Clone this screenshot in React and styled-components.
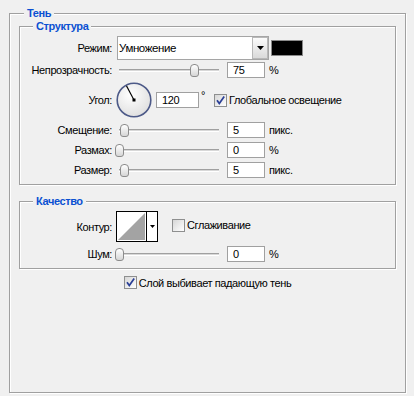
import React from "react";
import styled, { createGlobalStyle } from "styled-components";

const GlobalStyle = createGlobalStyle`
  html, body { margin: 0; padding: 0; background: #f0f0f0; }
  body {
    font-family: "Liberation Sans", Arial, sans-serif;
    font-size: 11px;
    letter-spacing: -0.4px;
    color: #000;
  }
`;

const Page = styled.div`
  width: 414px;
  height: 396px;
  box-sizing: border-box;
  padding: 7px 8px 3px 9px;
`;

const Group = styled.fieldset`
  margin: ${(p) => p.$mt || 0}px 0 0 0;
  min-width: 0;
  box-sizing: border-box;
  border: 1px solid #a0a0a0;
  box-shadow: inset 1px 1px 0 #fff, 1px 1px 0 #fff;
  padding: ${(p) => p.$pad};
  height: ${(p) => (p.$fill ? "100%" : "auto")};
`;

const Legend = styled.legend`
  margin-left: ${(p) => p.$indent}px;
  padding: 0 3px;
  font-weight: bold;
  color: #0b50d2;
  line-height: 13px;
  background: #f0f0f0;
`;

const Row = styled.div`
  display: flex;
  align-items: center;
  justify-content: ${(p) => (p.$center ? "center" : "flex-start")};
  margin-top: ${(p) => p.$mt || 0}px;
  height: ${(p) => p.$h}px;
`;

const Label = styled.span`
  flex: none;
  width: 83px;
  margin-right: 4px;
  text-align: right;
  white-space: nowrap;
`;

const Select = styled.div`
  flex: none;
  display: flex;
  width: 152px;
  height: 24px;
  box-sizing: border-box;
  margin-left: 1px;
  border: 1px solid #a5a5a5;
  background: #fff;
`;

const SelectText = styled.span`
  flex: 1;
  display: flex;
  align-items: center;
  padding-left: 1px;
  font-size: 11.5px;
`;

const SelectButton = styled.span`
  flex: none;
  width: 16px;
  box-sizing: border-box;
  border: 1px solid #b8b8b8;
  background: linear-gradient(#fbfbfb, #dadada);
  display: flex;
  align-items: center;
  justify-content: center;
`;

const Swatch = styled.span`
  flex: none;
  width: 32px;
  height: 16px;
  box-sizing: border-box;
  margin-left: 2px;
  border: 1px solid #8a8a8a;
  background: #000;
`;

const SliderBox = styled.div`
  flex: none;
  position: relative;
  width: 108px;
  height: 16px;
  margin-right: 3px;
`;

const Track = styled.div`
  width: 100px;
  height: 3px;
  box-sizing: border-box;
  margin: 7px 0 0 3px;
  border-top: 1px solid #a0a0a0;
  border-bottom: 1px solid #fff;
  background: #d8d8d8;
`;

const Thumb = styled.span`
  position: absolute;
  top: 2px;
  width: 9px;
  height: 13px;
  box-sizing: border-box;
  border: 1px solid #8c8c8c;
  border-radius: 4px 4px 3px 3px;
  background: linear-gradient(#ffffff, #d6d6d6);
`;

const Field = styled.input`
  flex: none;
  width: ${(p) => p.$w || 38}px;
  height: 16px;
  box-sizing: border-box;
  margin: 0;
  padding: 0 0 0 5px;
  border: 1px solid #a0a0a0;
  background: #fff;
  font: inherit;
  letter-spacing: inherit;
  color: #000;
  outline: none;
`;

const Unit = styled.span`
  flex: none;
  margin-left: ${(p) => p.$ml ?? 4}px;
  align-self: ${(p) => (p.$top ? "flex-start" : "center")};
  margin-top: ${(p) => (p.$top ? 7 : 0)}px;
`;

const Dial = styled.svg`
  flex: none;
  width: 37px;
  height: 37px;
  margin-right: 3px;
`;

const CheckBox = styled.span`
  flex: none;
  width: 13px;
  height: 13px;
  box-sizing: border-box;
  margin-left: ${(p) => p.$ml || 0}px;
  margin-bottom: ${(p) => p.$lift || 0}px;
  border: 1px solid #8e8f8f;
  background: linear-gradient(135deg, #d6d6d6, #ffffff);
  display: flex;
  align-items: center;
  justify-content: center;
`;

const CheckText = styled.span`
  flex: none;
  margin-left: 2px;
  margin-bottom: ${(p) => p.$lift || 0}px;
  white-space: nowrap;
`;

const Contour = styled.div`
  flex: none;
  display: flex;
  width: 42px;
  height: 31px;
  box-sizing: border-box;
  border: 1px solid #000;
  background: #fff;
`;

const ContourPreview = styled.svg`
  flex: none;
  width: 29px;
  height: 29px;
  border-right: 1px solid #000;
`;

const ContourArrow = styled.span`
  flex: 1;
  display: flex;
  align-items: center;
  justify-content: center;
`;

const Arrow = ({ w = 7, h = 4 }) => (
  <svg width={w} height={h} viewBox={`0 0 ${w} ${h}`}>
    <polygon points={`0,0 ${w},0 ${w / 2},${h}`} fill="#000" />
  </svg>
);

const Check = () => (
  <svg width="11" height="11" viewBox="0 0 11 11">
    <path d="M2 5.2 L4.3 8.6 L9.2 1.4" fill="none" stroke="#2a3f96" strokeWidth="1.7" />
  </svg>
);

const Slider = ({ value }) => (
  <SliderBox>
    <Track />
    <Thumb style={{ left: `${value - 1}px` }} />
  </SliderBox>
);

const AngleDial = ({ angle }) => {
  const r = (angle * Math.PI) / 180;
  const cx = 18;
  const cy = 18;
  const x = cx + 16 * Math.cos(r);
  const y = cy - 16 * Math.sin(r);
  return (
    <Dial viewBox="0 0 37 37">
      <defs>
        <radialGradient id="dialFill" cx="40%" cy="35%" r="70%">
          <stop offset="0%" stopColor="#ffffff" />
          <stop offset="100%" stopColor="#dedede" />
        </radialGradient>
      </defs>
      <circle cx={cx} cy={cy} r="16.8" fill="url(#dialFill)" stroke="#4d5a88" strokeWidth="1.6" />
      <line x1={cx} y1={cy} x2={x} y2={y} stroke="#000" strokeWidth="1.1" />
      <rect x={cx - 1.5} y={cy - 1.5} width="3" height="3" fill="#000" />
    </Dial>
  );
};

const SliderRow = ({ label, value, field, unit, mt }) => (
  <Row $h={16} $mt={mt}>
    <Label>{label}</Label>
    <Slider value={value} />
    <Field readOnly value={field} />
    <Unit>{unit}</Unit>
  </Row>
);

export default function App() {
  return (
    <>
      <GlobalStyle />
      <Page>
        <Group $fill $pad="0 9px">
          <Legend $indent={5}>Тень</Legend>

          <Group $pad="3px 9px 6px 9px">
            <Legend $indent={4}>Структура</Legend>

            <Row $h={24}>
              <Label>Режим:</Label>
              <Select>
                <SelectText>Умножение</SelectText>
                <SelectButton>
                  <Arrow />
                </SelectButton>
              </Select>
              <Swatch />
            </Row>

            <SliderRow label="Непрозрачность:" value={75} field="75" unit="%" mt={2} />

            <Row $h={36} $mt={4}>
              <Label>Угол:</Label>
              <AngleDial angle={118} />
              <Field readOnly value="120" $w={43} />
              <Unit $ml={2} $top>°</Unit>
              <CheckBox $ml={9}>
                <Check />
              </CheckBox>
              <CheckText>Глобальное освещение</CheckText>
            </Row>

            <SliderRow label="Смещение:" value={5} field="5" unit="пикс." mt={4} />
            <SliderRow label="Размах:" value={0} field="0" unit="%" mt={4} />
            <SliderRow label="Размер:" value={5} field="5" unit="пикс." mt={4} />
          </Group>

          <Group $mt={10} $pad="3px 9px 6px 9px">
            <Legend $indent={4}>Качество</Legend>

            <Row $h={31}>
              <Label>Контур:</Label>
              <Contour>
                <ContourPreview viewBox="0 0 29 29">
                  <polygon points="1,28 28,1 28,28" fill="#a3a3a3" />
                </ContourPreview>
                <ContourArrow>
                  <Arrow w={5} h={3} />
                </ContourArrow>
              </Contour>
              <CheckBox $ml={14} $lift={3} />
              <CheckText $lift={3}>Сглаживание</CheckText>
            </Row>

            <SliderRow label="Шум:" value={0} field="0" unit="%" mt={4} />
          </Group>

          <Row $h={13} $mt={7} $center>
            <CheckBox>
              <Check />
            </CheckBox>
            <CheckText>Слой выбивает падающую тень</CheckText>
          </Row>
        </Group>
      </Page>
    </>
  );
}
